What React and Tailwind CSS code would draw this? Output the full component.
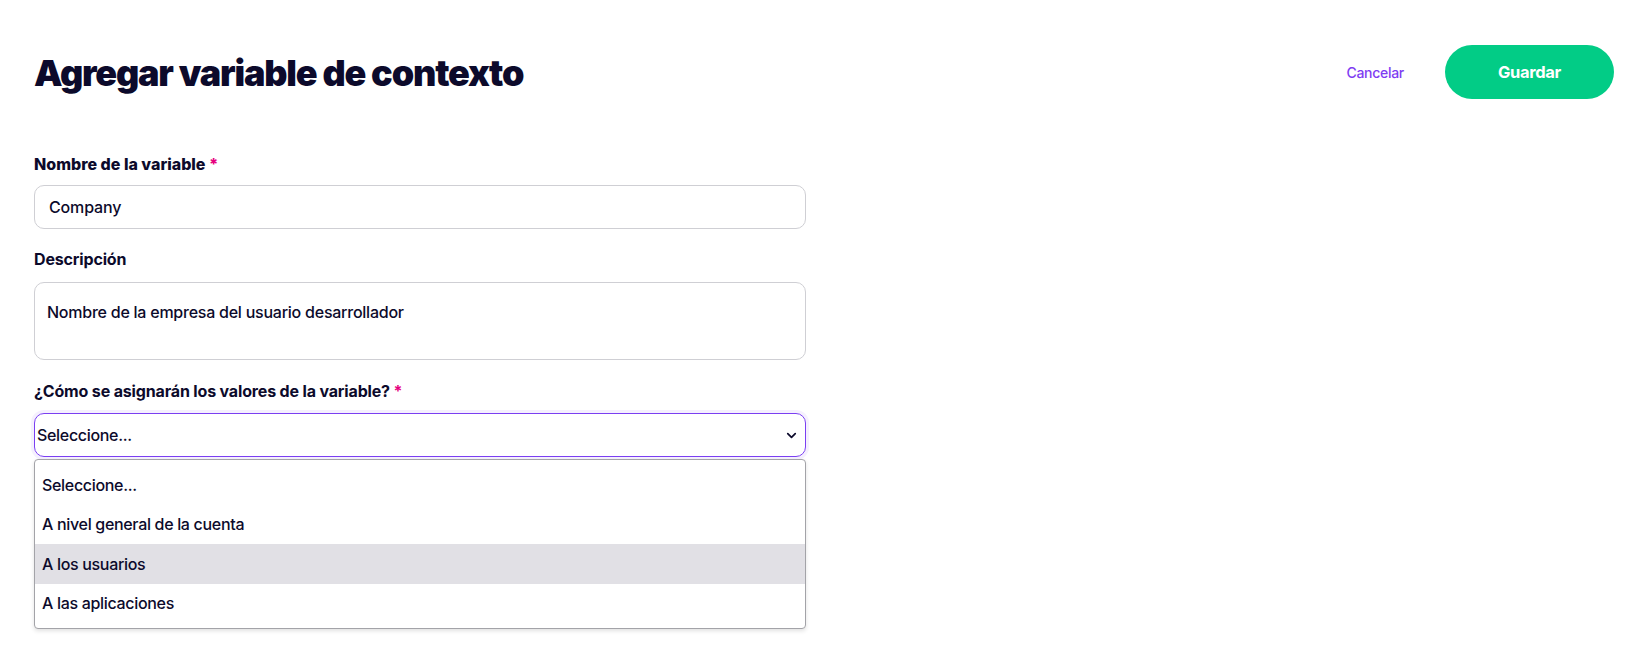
import { ChevronDown } from 'lucide-react'

const options = [
  'Seleccione...',
  'A nivel general de la cuenta',
  'A los usuarios',
  'A las aplicaciones',
]

export default function App() {
  return (
    <div className="min-h-screen bg-white text-[#0c0a2b] font-['Inter',sans-serif] px-[34px] pt-[45px]">
      <div className="flex items-center justify-between">
        <h1 className="text-[36px] font-black tracking-[-0.033em] leading-none mt-[2px]">
          Agregar variable de contexto
        </h1>
        <div className="flex items-center gap-[41px] mr-[-9px]">
          <button className="text-[14px] font-medium text-[#7f3df2] tracking-[-0.02em]">Cancelar</button>
          <button className="w-[169px] h-[54px] rounded-full bg-[#02cc86] text-white text-[16.5px] font-bold tracking-[-0.02em]">
            Guardar
          </button>
        </div>
      </div>

      <div className="w-[772px] mt-[55px] flex flex-col">
        <label className="text-[16px] font-extrabold tracking-[0em] leading-5">
          Nombre de la variable <span className="text-[#e6007e]">*</span>
        </label>
        <div className="mt-[11px] h-[44px] rounded-[10px] border border-[#cfcfd4] flex items-center px-[14px] text-[16px] font-medium tracking-[-0.01em]">
          Company
        </div>

        <label className="mt-[20px] text-[16px] font-bold tracking-[-0.01em] leading-5">Descripción</label>
        <div className="mt-[13px] h-[78px] rounded-[10px] border border-[#cfcfd4] px-[12px] pt-[19px] text-[16px] font-medium tracking-[-0.015em] leading-5">
          Nombre de la empresa del usuario desarrollador
        </div>

        <label className="mt-[21px] text-[16px] font-bold tracking-[-0.01em] leading-5">
          ¿Cómo se asignarán los valores de la variable? <span className="text-[#e6007e]">*</span>
        </label>
        <div className="relative mt-[12px]">
          <div className="h-[44px] rounded-[10px] border border-[#7b3ff2] shadow-[0_0_0_3px_rgba(123,63,242,0.08)] flex items-center justify-between pl-[2px] pr-[6px] text-[16px] font-medium tracking-[-0.02em]">
            <span>Seleccione...</span>
            <ChevronDown size={15} strokeWidth={2.75} />
          </div>
          <div className="mt-[2px] rounded-[4px] border border-[#a3a3a8] shadow-[0_2px_4px_rgba(0,0,0,0.12)] bg-white py-[5px] text-[16px] font-medium tracking-[-0.02em]">
            {options.map((opt, i) => (
              <div
                key={opt}
                className={
                  'h-[39.5px] flex items-center px-[7px] ' + (i === 2 ? 'bg-[#e1e0e5]' : '')
                }
              >
                {opt}
              </div>
            ))}
          </div>
        </div>
      </div>
    </div>
  )
}
